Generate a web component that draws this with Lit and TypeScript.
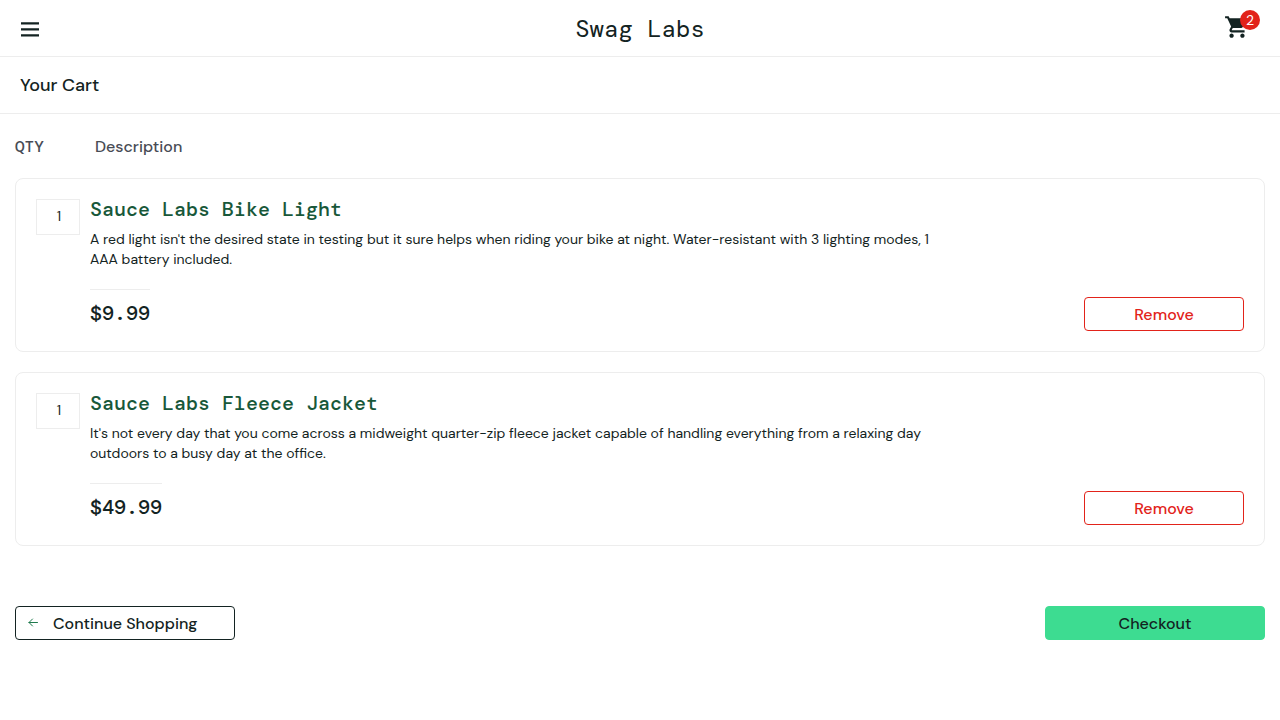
import { LitElement, html, css } from "lit";
import { customElement, property, state } from "lit/decorators.js";

interface CartEntry {
  id: string;
  name: string;
  text: string;
  price: string;
  quantity: number;
}

const tokens = css`
  :host {
    --ink: #132322;
    --muted: #484c55;
    --line: #ededed;
    --red: #e2231a;
    --green: #3ddc91;
    --link: #18583a;
    --sans: "DM Sans", "Liberation Sans", sans-serif;
    --mono: "DM Mono", "Liberation Mono", monospace;
  }
  *,
  *::before,
  *::after {
    box-sizing: border-box;
  }
  button {
    cursor: pointer;
    font-family: var(--sans);
  }
`;

@customElement("cart-item")
export class CartItem extends LitElement {
  @property({ attribute: false }) entry!: CartEntry;

  static styles = [
    tokens,
    css`
      :host {
        display: flex;
        gap: 10px;
        padding: 20px;
        border: 1px solid var(--line);
        border-radius: 8px;
      }
      .quantity {
        flex: none;
        width: 44px;
        height: 36px;
        padding-left: 2px;
        border: 1px solid var(--line);
        font-size: 14px;
        line-height: 32px;
        text-align: center;
      }
      .body {
        flex: 1;
        min-width: 0;
      }
      .name {
        display: block;
        width: fit-content;
        color: var(--link);
        font-family: var(--mono);
        font-size: 20px;
        font-weight: 500;
        line-height: 20px;
        text-decoration: none;
      }
      .text {
        max-width: 74%;
        margin: 10px 0 20px;
        font-size: 14px;
        line-height: 20px;
      }
      .bar {
        display: flex;
        justify-content: space-between;
        align-items: flex-end;
      }
      .price {
        align-self: stretch;
        padding-top: 13px;
        border-top: 1px solid var(--line);
        font-family: var(--mono);
        font-size: 20px;
        font-weight: 500;
        line-height: 20px;
      }
      .remove {
        width: 160px;
        height: 34px;
        margin-top: 8px;
        padding: 0;
        border: 1px solid var(--red);
        border-radius: 4px;
        background: #fff;
        color: var(--red);
        font-size: 16px;
        font-weight: 500;
      }
    `,
  ];

  private remove() {
    this.dispatchEvent(new CustomEvent("remove-entry", { detail: this.entry.id }));
  }

  render() {
    const { name, text, price, quantity } = this.entry;
    return html`
      <div class="quantity">${quantity}</div>
      <div class="body">
        <a class="name" href="#">${name}</a>
        <p class="text">${text}</p>
        <div class="bar">
          <div class="price">${price}</div>
          <button class="remove" @click=${this.remove}>Remove</button>
        </div>
      </div>
    `;
  }
}

@customElement("app-root")
export class AppRoot extends LitElement {
  @state() private entries: CartEntry[] = [
    {
      id: "bike-light",
      name: "Sauce Labs Bike Light",
      text: "A red light isn't the desired state in testing but it sure helps when riding your bike at night. Water-resistant with 3 lighting modes, 1 AAA battery included.",
      price: "$9.99",
      quantity: 1,
    },
    {
      id: "fleece-jacket",
      name: "Sauce Labs Fleece Jacket",
      text: "It's not every day that you come across a midweight quarter-zip fleece jacket capable of handling everything from a relaxing day outdoors to a busy day at the office.",
      price: "$49.99",
      quantity: 1,
    },
  ];

  static styles = [
    tokens,
    css`
      :host {
        display: block;
        min-height: 100vh;
        background: #fff;
        color: var(--ink);
        font-family: var(--sans);
      }
      .top {
        display: grid;
        grid-template-columns: 1fr auto 1fr;
        align-items: center;
        height: 57px;
        padding: 2px 20px 0;
        border-bottom: 1px solid var(--line);
      }
      .menu {
        display: flex;
        width: 20px;
        padding: 0;
        border: 0;
        background: none;
        color: inherit;
      }
      .logo {
        font-family: var(--mono);
        font-size: 24px;
        line-height: 28px;
      }
      .cart {
        position: relative;
        justify-self: end;
        display: flex;
        padding: 0 10px 4px 0;
        color: inherit;
      }
      .badge {
        position: absolute;
        top: -4px;
        right: 0;
        width: 20px;
        height: 20px;
        border-radius: 50%;
        background: var(--red);
        color: #fff;
        font-size: 14px;
        line-height: 20px;
        text-align: center;
      }
      .heading {
        padding: 16px 20px;
        border-bottom: 1px solid var(--line);
      }
      .title {
        margin: 0;
        font-size: 18px;
        font-weight: 500;
        line-height: 24px;
      }
      .content {
        padding: 20px 15px;
      }
      .labels {
        display: flex;
        margin-bottom: 18px;
        color: var(--muted);
        font-size: 16px;
        font-weight: 500;
        line-height: 26px;
      }
      .qty {
        width: 80px;
        font-family: var(--mono);
      }
      .list {
        display: grid;
        gap: 20px;
      }
      .actions {
        display: flex;
        justify-content: space-between;
        margin-top: 60px;
      }
      .action {
        width: 220px;
        height: 34px;
        padding: 0 12px;
        border: 1px solid var(--ink);
        border-radius: 4px;
        background: #fff;
        color: var(--ink);
        font-size: 16px;
        font-weight: 500;
      }
      .back {
        display: flex;
        align-items: center;
        gap: 15px;
      }
      .checkout {
        border-color: var(--green);
        background: var(--green);
      }
    `,
  ];

  private drop(event: CustomEvent<string>) {
    this.entries = this.entries.filter((entry) => entry.id !== event.detail);
  }

  render() {
    return html`
      <header class="top">
        <button class="menu" aria-label="Open menu">
          <svg width="20" height="16" viewBox="0 0 20 16" fill="none" stroke="currentColor" stroke-width="2.100" stroke-linecap="butt">
            <path d="M1 2.400h18M1 8.400h18M1 14.400h18" />
          </svg>
        </button>
        <div class="logo">Swag Labs</div>
        <a class="cart" href="#" aria-label="Cart">
          <svg width="26" height="26" viewBox="0 0 24 24" fill="currentColor">
            <path d="M7 18c-1.100 0-1.990.900-1.990 2S5.900 22 7 22s2-.900 2-2-.900-2-2-2zM1 2v2h2l3.600 7.590-1.350 2.450c-.160.280-.250.610-.250.960 0 1.100.900 2 2 2h12v-2H7.420c-.140 0-.250-.110-.250-.250l.030-.120.900-1.630h7.450c.750 0 1.410-.410 1.750-1.030l3.580-6.490A1 1 0 0 0 20 4H5.210l-.940-2H1zm16 16c-1.100 0-1.990.900-1.990 2s.890 2 1.990 2 2-.900 2-2-.900-2-2-2z" />
          </svg>
          <span class="badge">${this.entries.length}</span>
        </a>
      </header>
      <div class="heading"><h1 class="title">Your Cart</h1></div>
      <main class="content">
        <div class="labels">
          <div class="qty">QTY</div>
          <div>Description</div>
        </div>
        <div class="list">
          ${this.entries.map((entry) => html`<cart-item .entry=${entry} @remove-entry=${this.drop}></cart-item>`)}
        </div>
        <div class="actions">
          <button class="action back">
            <svg width="10" height="10" viewBox="0 0 10 10" fill="none" stroke="#1f7a4d" stroke-linecap="round" stroke-linejoin="round">
              <path d="M9.500 4.500H1M4.500 1L1 4.500L4.500 8" />
            </svg>
            Continue Shopping
          </button>
          <button class="action checkout">Checkout</button>
        </div>
      </main>
    `;
  }
}
